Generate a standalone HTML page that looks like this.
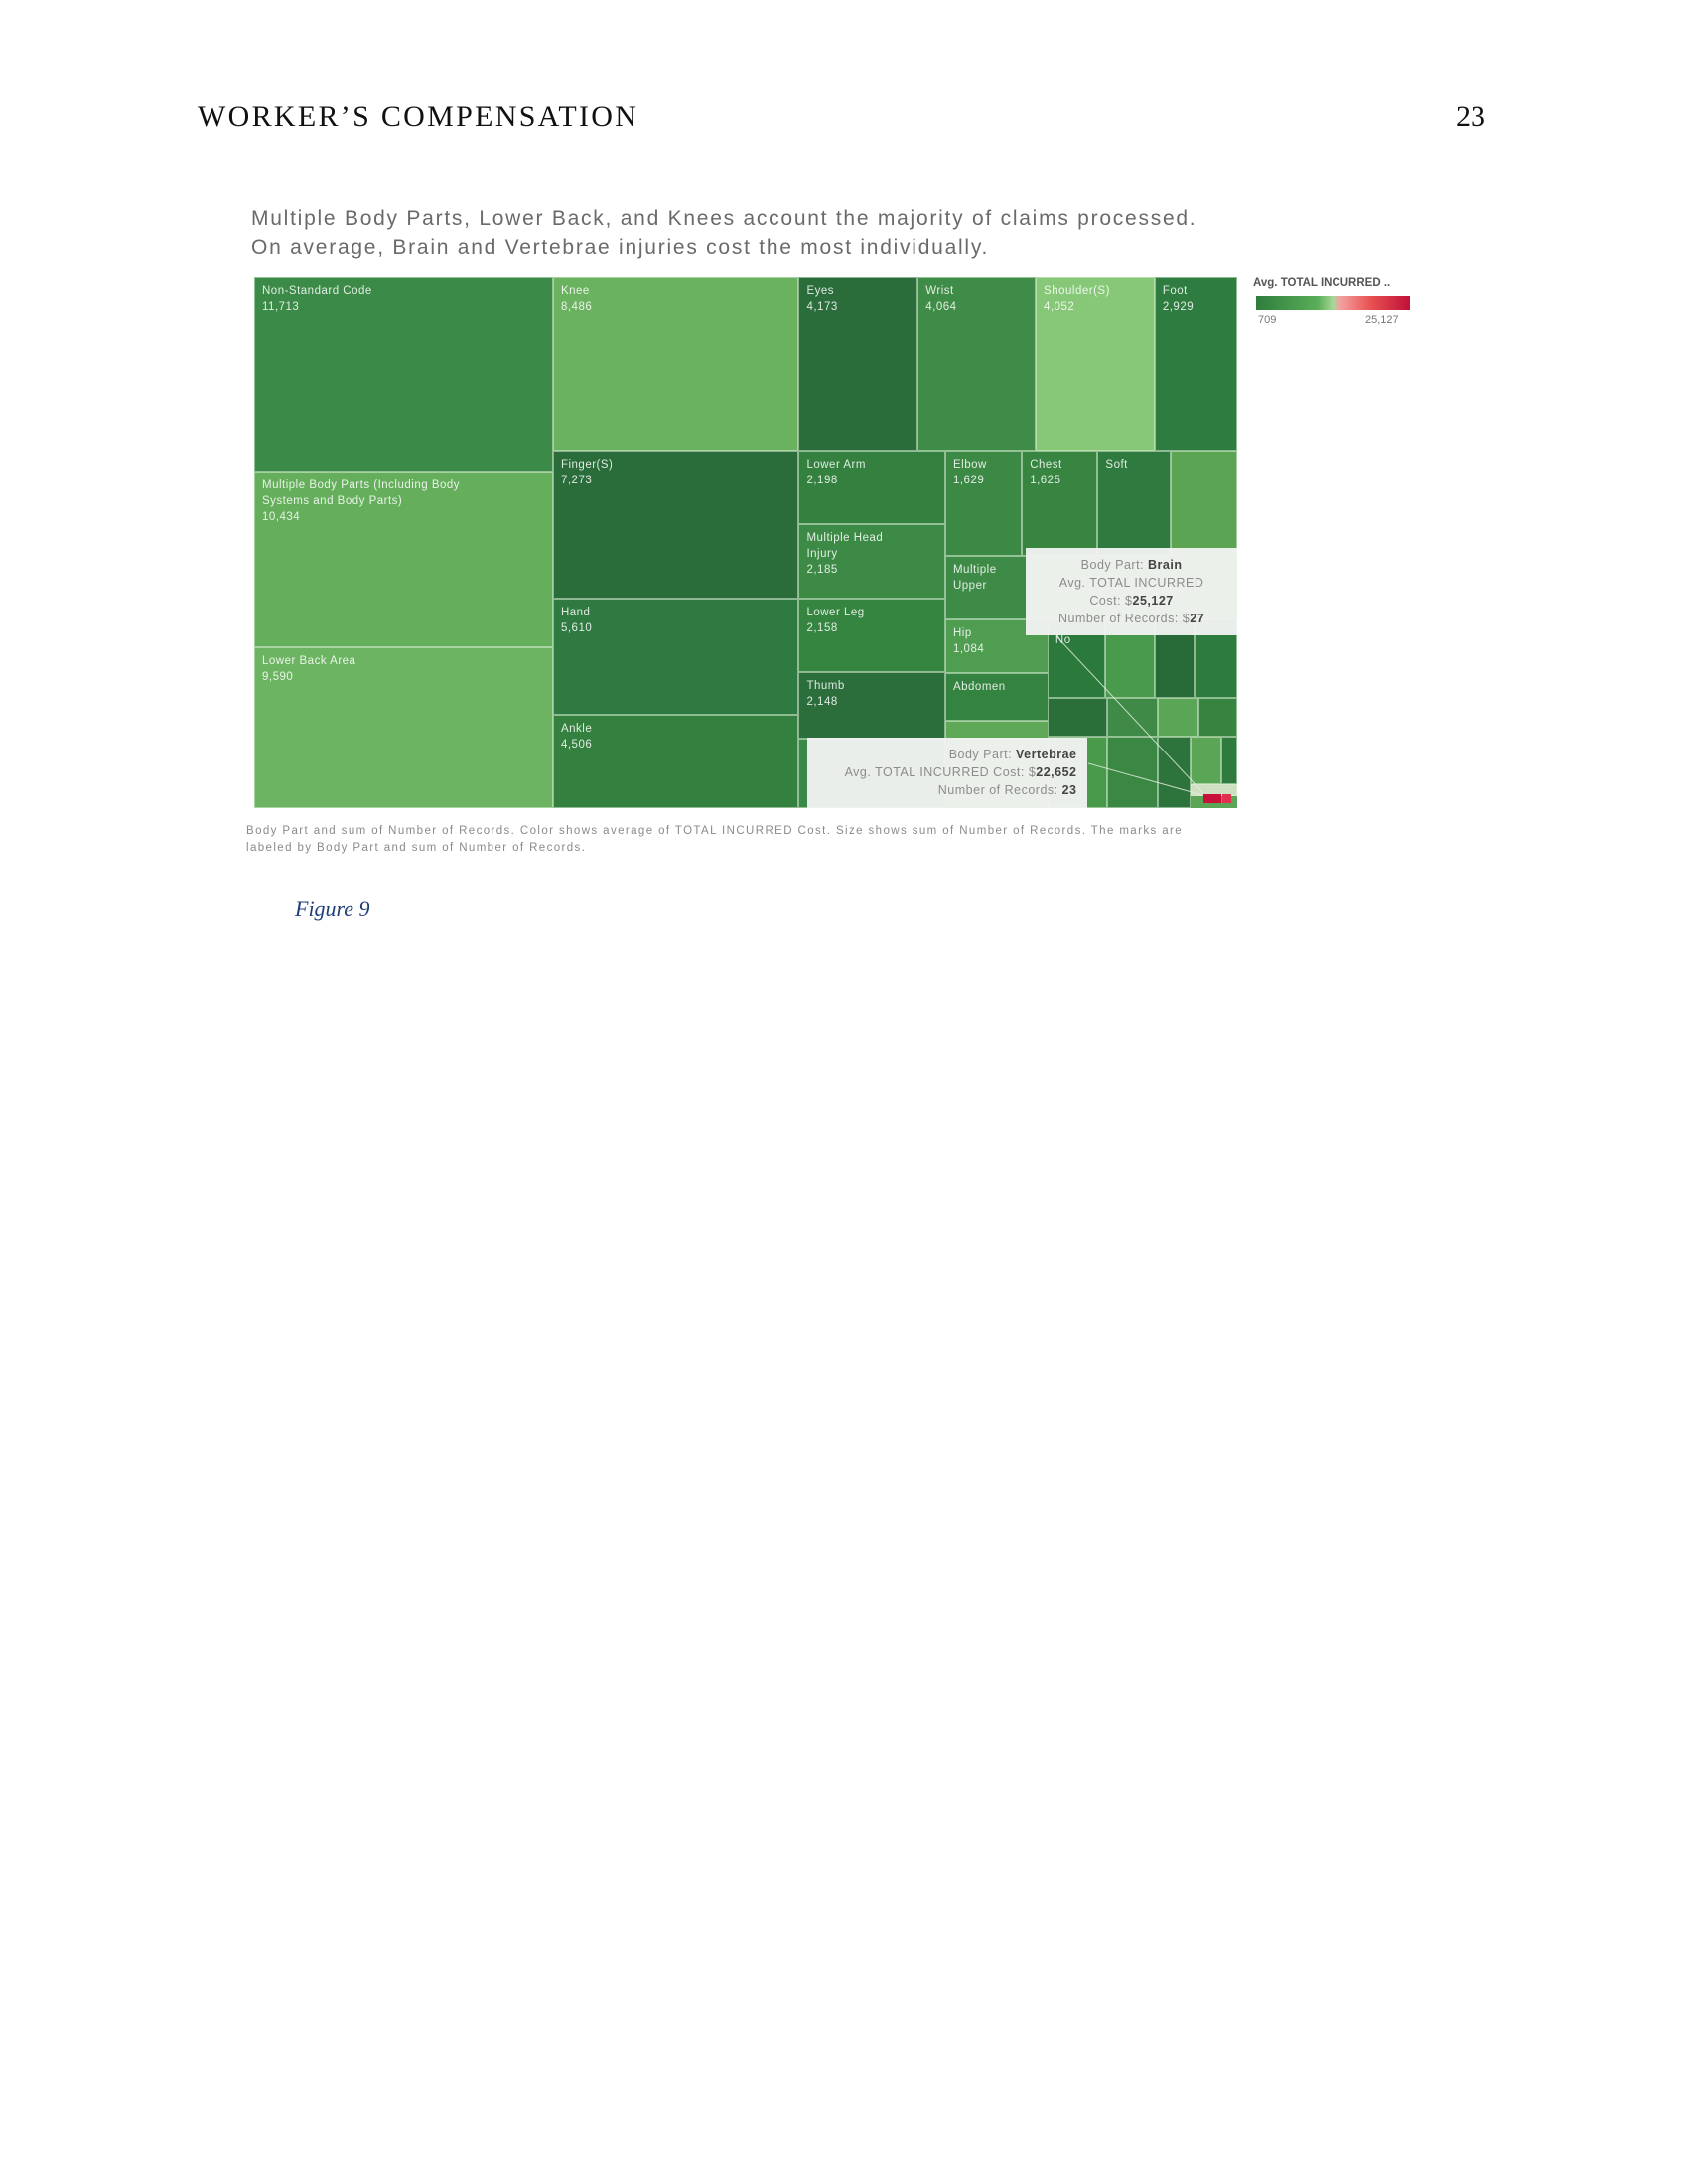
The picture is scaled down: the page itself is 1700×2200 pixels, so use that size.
<!DOCTYPE html>
<html><head><meta charset="utf-8">
<style>
html,body{margin:0;padding:0;background:#fff;}
body{width:1700px;height:2200px;position:relative;overflow:hidden;font-family:"Liberation Sans",sans-serif;}
.hdr{position:absolute;top:101px;font-family:"Liberation Serif",serif;font-size:30px;color:#111;}
.title{position:absolute;left:253px;font-size:21px;color:#6a6a6a;letter-spacing:1.75px;white-space:nowrap;}
#chart{position:absolute;left:256px;top:279px;width:990px;height:535px;background:#5aa656;overflow:hidden;}
.c{position:absolute;box-sizing:border-box;border:1px solid rgba(220,240,215,0.55);color:rgba(255,255,255,0.85);font-size:11.5px;line-height:16px;padding:5px 7px;overflow:hidden;letter-spacing:0.5px;}
.tt{position:absolute;box-sizing:border-box;background:rgba(241,243,241,0.96);color:#8c8c8c;font-size:12.5px;line-height:18px;padding:8px 10px;letter-spacing:0.5px;}
.tt b{color:#444;}
.cap{position:absolute;left:248px;font-size:11.5px;color:#8a8a8a;white-space:nowrap;letter-spacing:1.4px;}
</style></head><body>
<div class="hdr" style="left:199px;letter-spacing:2.3px;">WORKER’S COMPENSATION</div>
<div class="hdr" style="left:1466px;">23</div>
<div class="title" style="top:209px;">Multiple Body Parts, Lower Back, and Knees account the majority of claims processed.</div>
<div class="title" style="top:238px;">On average, Brain and Vertebrae injuries cost the most individually.</div>

<div id="chart">
<div class="c" style="left:0;top:0;width:30.4%;height:36.7%;background:#3b8a47;">Non-Standard Code<br>11,713</div>
<div class="c" style="left:0;top:36.7%;width:30.4%;height:33%;background:#65ae5c;">Multiple Body Parts (Including Body<br>Systems and Body Parts)<br>10,434</div>
<div class="c" style="left:0;top:69.7%;width:30.4%;height:30.3%;background:#6cb462;">Lower Back Area<br>9,590</div>
<div class="c" style="left:30.4%;top:0;width:25%;height:32.7%;background:#6ab260;">Knee<br>8,486</div>
<div class="c" style="left:30.4%;top:32.7%;width:25%;height:27.9%;background:#2a6c3a;">Finger(S)<br>7,273</div>
<div class="c" style="left:30.4%;top:60.6%;width:25%;height:21.9%;background:#2f7a40;">Hand<br>5,610</div>
<div class="c" style="left:30.4%;top:82.5%;width:25%;height:17.5%;background:#33803f;">Ankle<br>4,506</div>
<div class="c" style="left:55.4%;top:0;width:12.1%;height:32.7%;background:#2a6d3b;">Eyes<br>4,173</div>
<div class="c" style="left:67.5%;top:0;width:12%;height:32.7%;background:#3f8b48;">Wrist<br>4,064</div>
<div class="c" style="left:79.5%;top:0;width:12.1%;height:32.7%;background:#86c877;">Shoulder(S)<br>4,052</div>
<div class="c" style="left:91.6%;top:0;width:8.4%;height:32.7%;background:#2f7c40;">Foot<br>2,929</div>
<div class="c" style="left:55.4%;top:32.7%;width:14.9%;height:13.9%;background:#33803f;">Lower Arm<br>2,198</div>
<div class="c" style="left:55.4%;top:46.6%;width:14.9%;height:14%;background:#3d8a46;">Multiple Head<br>Injury<br>2,185</div>
<div class="c" style="left:55.4%;top:60.6%;width:14.9%;height:13.8%;background:#358440;">Lower Leg<br>2,158</div>
<div class="c" style="left:55.4%;top:74.4%;width:14.9%;height:12.5%;background:#2b6e3b;">Thumb<br>2,148</div>
<div class="c" style="left:55.4%;top:86.9%;width:14.9%;height:13.1%;background:#3a8845;"></div>
<div class="c" style="left:70.3%;top:32.7%;width:7.8%;height:19.8%;background:#3c8946;">Elbow<br>1,629</div>
<div class="c" style="left:78.1%;top:32.7%;width:7.7%;height:19.8%;background:#378541;">Chest<br>1,625</div>
<div class="c" style="left:85.8%;top:32.7%;width:7.4%;height:19.8%;background:#2f7b3f;">Soft</div>
<div class="c" style="left:93.2%;top:32.7%;width:6.8%;height:19.8%;background:#5aa454;"></div>
<div class="c" style="left:70.3%;top:52.5%;width:8.4%;height:11.9%;background:#3e8b47;">Multiple<br>Upper</div>
<div class="c" style="left:70.3%;top:64.4%;width:10.5%;height:10.2%;background:#4f9d50;">Hip<br>1,084</div>
<div class="c" style="left:70.3%;top:74.6%;width:10.5%;height:9%;background:#358340;">Abdomen</div>
<div class="c" style="left:70.3%;top:83.6%;width:10.5%;height:3.5%;background:#5ea858;"></div>
<div class="c" style="left:80.7%;top:64.5%;width:5.9%;height:14.8%;background:#2b7a3c;padding-top:12px;">No</div>
<div class="c" style="left:86.6%;top:64.5%;width:5%;height:14.8%;background:#4a9a4e;"></div>
<div class="c" style="left:91.6%;top:64.5%;width:4.1%;height:14.8%;background:#276a38;"></div>
<div class="c" style="left:95.7%;top:64.5%;width:4.3%;height:14.8%;background:#2e7b3e;"></div>
<div class="c" style="left:80.7%;top:79.3%;width:6.1%;height:7.2%;background:#2a6e3a;"></div>
<div class="c" style="left:86.8%;top:79.3%;width:5.1%;height:7.2%;background:#3e8a46;"></div>
<div class="c" style="left:91.9%;top:79.3%;width:4.2%;height:7.2%;background:#5aa656;"></div>
<div class="c" style="left:96.1%;top:79.3%;width:3.9%;height:7.2%;background:#36843f;"></div>
<div class="c" style="left:80.7%;top:86.5%;width:6.1%;height:13.5%;background:#4a9a4c;"></div>
<div class="c" style="left:86.8%;top:86.5%;width:5.1%;height:13.5%;background:#3a8844;"></div>
<div class="c" style="left:91.9%;top:86.5%;width:3.4%;height:13.5%;background:#2d743c;"></div>
<div class="c" style="left:95.3%;top:86.5%;width:3.1%;height:9%;background:#5aa656;"></div>
<div class="c" style="left:98.4%;top:86.5%;width:1.6%;height:9%;background:#2f7a3e;"></div>
<div class="c" style="left:95.3%;top:95.5%;width:4.7%;height:2%;background:#cfe0c0;"></div>
<div style="position:absolute;left:96.6%;top:97.4%;width:1.8%;height:1.6%;background:#c8103a;"></div>
<div style="position:absolute;left:98.5%;top:97.4%;width:0.9%;height:1.6%;background:#e03050;"></div>
<svg style="position:absolute;left:0;top:0" width="990" height="535" viewBox="0 0 990 535">
<line x1="808" y1="362" x2="956" y2="520" stroke="rgba(230,240,225,0.8)" stroke-width="1"/>
<line x1="840" y1="490" x2="955" y2="522" stroke="rgba(230,240,225,0.8)" stroke-width="1"/>
</svg>
<div class="tt" style="left:78.5%;top:51%;width:21.5%;height:16.5%;text-align:center;">Body Part: <b>Brain</b><br>Avg. TOTAL INCURRED<br>Cost: $<b>25,127</b><br>Number of Records: $<b>27</b></div>
<div class="tt" style="left:56.3%;top:86.7%;width:28.4%;height:13.3%;text-align:right;">Body Part: <b>Vertebrae</b><br>Avg. TOTAL INCURRED Cost: $<b>22,652</b><br>Number of Records: <b>23</b></div>
</div>

<div style="position:absolute;left:1262px;top:279px;font-size:11.5px;color:#555;font-weight:bold;white-space:nowrap;">Avg. TOTAL INCURRED ..</div>
<div style="position:absolute;left:1265px;top:298px;width:155px;height:14px;background:linear-gradient(to right,#2e7d3e,#5bae58 40%,#a8d898 50%,#f4a0a0 55%,#e85050 75%,#c0103a);"></div>
<div style="position:absolute;left:1267px;top:316px;font-size:11px;color:#777;">709</div>
<div style="position:absolute;left:1375px;top:316px;font-size:11px;color:#777;">25,127</div>

<div class="cap" style="top:831px;">Body Part and sum of Number of Records.  Color shows average of TOTAL INCURRED Cost.  Size shows sum of Number of Records.  The marks are</div>
<div class="cap" style="top:848px;">labeled by Body Part and sum of Number of Records.</div>
<div style="position:absolute;left:297px;top:903px;font-family:'Liberation Serif',serif;font-style:italic;font-size:22px;color:#1f3f7a;">Figure 9</div>
</body></html>
